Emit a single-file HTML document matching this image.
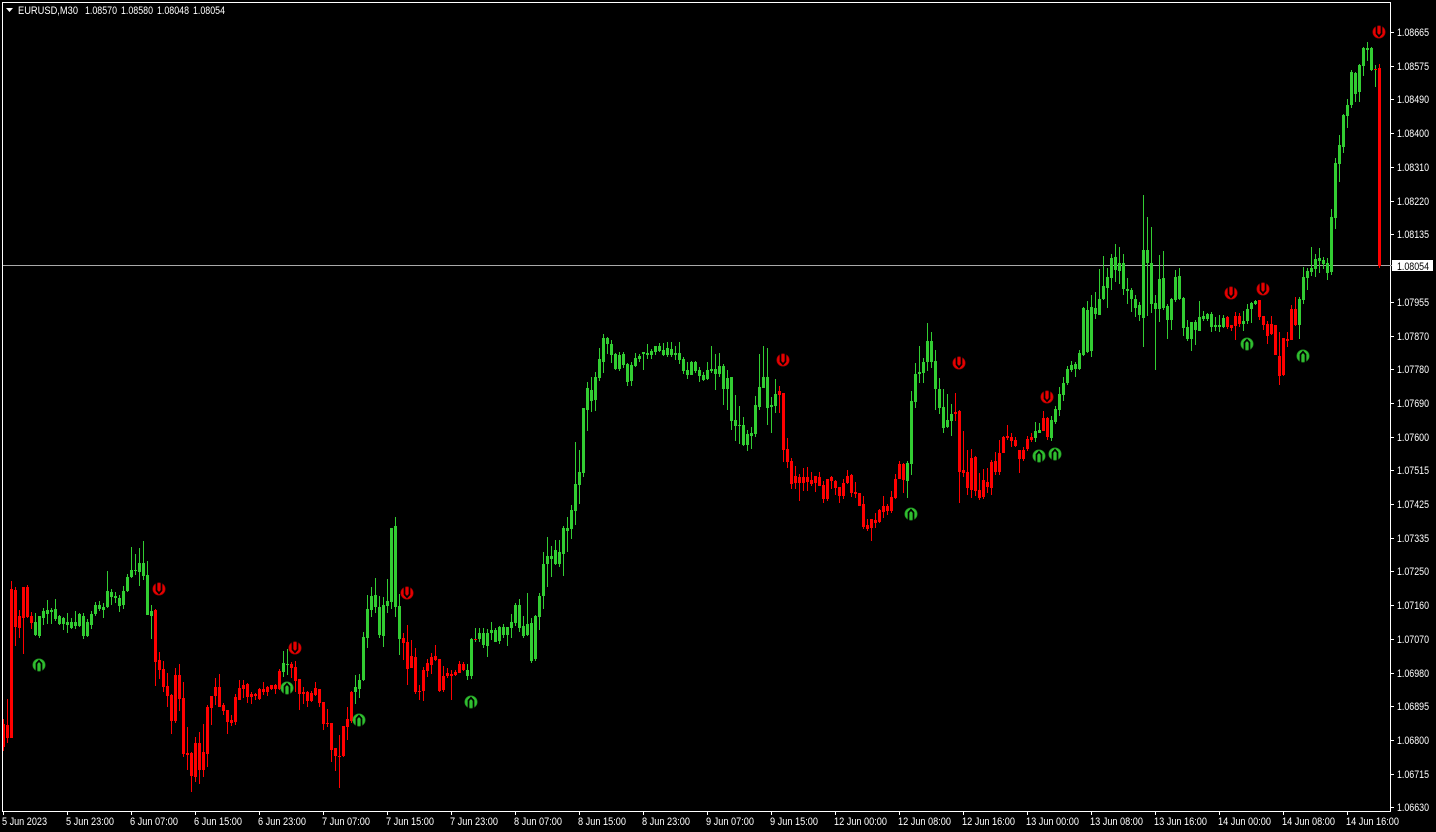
<!DOCTYPE html>
<html><head><meta charset="utf-8"><title>EURUSD,M30</title>
<style>html,body{margin:0;padding:0;background:#000;width:1436px;height:832px;overflow:hidden}
svg{display:block}text{font-family:"Liberation Sans",Arial,sans-serif;font-size:11px;fill:#fff}</style></head><body>
<svg width="1436" height="832" viewBox="0 0 1436 832" xmlns="http://www.w3.org/2000/svg">
<defs>
<g id="dn"><circle r="6.2" fill="#e80000" stroke="#a00000" stroke-width=".6"/><path d="M-2.5 -7V1.500L0 4.200L2.500 1.500V-7" fill="none" stroke="#000" stroke-width="1.700"/></g>
<g id="up"><circle r="6.2" fill="#30c030" stroke="#208a20" stroke-width=".6"/><path d="M-2.5 7V-1.500L0 -4.200L2.500 -1.500V7" fill="none" stroke="#000" stroke-width="1.700"/></g>
</defs>
<rect width="1436" height="832" fill="#000"/>
<g shape-rendering="crispEdges" fill="none">
<path stroke="#a9a9a9" d="M3 265.5H1390"/>
<!-- green wicks -->
<path stroke="#32cd32" d="M35.5 613V636M39.5 616V638M43.5 608V625M47.5 600V624M51.5 608V624M55.5 599V621M59.5 615V625M63.5 617V630M67.5 613V633M71.5 618V629M75.5 611V629M79.5 613V627M83.5 613V639M87.5 619V637M91.5 611V629M95.5 602V616M99.5 601V611M103.5 603V618M107.5 571V608M111.5 589V605M115.5 592V603M119.5 595V612M123.5 586V609M127.5 574V592M131.5 547V578M135.5 554V575M139.5 548V586M143.5 541V580M147.5 561V615M151.5 605V639
M283.5 651V677M287.5 649V675
M355.5 675V704M359.5 674V698M363.5 632V681M367.5 595V648M371.5 587V617M375.5 578V613M379.5 596V638M383.5 597V647M387.5 579V613M391.5 528V609M395.5 517V617M399.5 594V655
M467.5 664V680M471.5 638V679M475.5 628V642M479.5 628V642M483.5 628V648M487.5 629V657M491.5 622V640M495.5 628V642M499.5 626V644M503.5 624V638M507.5 627V646M511.5 614V638M515.5 603V626M519.5 599V632M523.5 616V638M527.5 593V636M531.5 618V663M535.5 615V661M539.5 593V630M543.5 552V609M547.5 537V587M551.5 546V577M555.5 540V565M559.5 540V567M563.5 526V576M567.5 517V552M571.5 505V539M575.5 442V525M579.5 450V504M583.5 408V477M587.5 382V431M591.5 377V412M595.5 372V411M599.5 348V381M603.5 334V373M607.5 337V354M611.5 340V363M615.5 353V370M619.5 352V371M623.5 352V368M627.5 363V386M631.5 362V386M635.5 353V367M639.5 354V362M643.5 352V370M647.5 344V359M651.5 349V359M655.5 346V355M659.5 343V352M663.5 343V356M667.5 342V357M671.5 342V357M675.5 346V360M679.5 342V364M683.5 357V374M687.5 362V379M691.5 361V375M695.5 361V373M699.5 367V382M703.5 372V381M707.5 362V380M711.5 346V373M715.5 354V390M719.5 353V377M723.5 364V405M727.5 370V410M731.5 377V430M735.5 395V441M739.5 406V444M743.5 417V446M747.5 430V451M751.5 427V449M755.5 396V437M759.5 354V410M763.5 346V388M767.5 348V425M771.5 397V433M775.5 379V413
M907.5 461V498M911.5 391V475M915.5 363V408M919.5 346V383M923.5 358V383M927.5 323V371M931.5 332V368M935.5 350V410M939.5 378V414M943.5 389V433M947.5 394V428M951.5 404V436
M1035.5 422V442M1039.5 423V433M1051.5 416V441M1055.5 406V424M1059.5 387V416M1063.5 377V401M1067.5 366V385M1071.5 361V372M1075.5 362V377M1079.5 350V370M1083.5 307V356M1087.5 301V353M1091.5 295V357M1095.5 292V319M1099.5 269V315M1103.5 256V300M1107.5 268V308M1111.5 254V290M1115.5 244V282M1119.5 247V284M1123.5 254V295M1127.5 278V304M1131.5 288V312M1135.5 295V317M1139.5 302V321M1143.5 195V347M1147.5 217V316M1151.5 227V313M1155.5 295V370M1159.5 255V322M1163.5 251V310M1167.5 304V339M1171.5 298V330M1175.5 270V302M1179.5 268V300M1183.5 297V336M1187.5 320V341M1191.5 322V351M1195.5 320V345M1199.5 301V331M1203.5 311V321M1207.5 313V321M1211.5 312V332M1215.5 317V331M1219.5 315V332M1223.5 315V328
M1243.5 311V331M1247.5 304V324M1251.5 302V323M1255.5 300V305
M1299.5 297V339M1303.5 267V304M1307.5 268V290M1311.5 247V276M1315.5 254V277M1319.5 248V273M1323.5 257V269M1327.5 258V280M1331.5 209V275M1335.5 158V229M1339.5 135V182M1343.5 114V153M1347.5 99V128M1351.5 70V108M1355.5 72V102M1359.5 64V102M1363.5 47V76M1367.5 42V61M1371.5 47V71M1375.5 65V87"/>
<!-- green bodies -->
<path stroke="#32cd32" stroke-width="3" d="M35.5 622V635M39.5 616V636M43.5 611V618M47.5 610V614M51.5 610V612M55.5 609V619M59.5 616V624M63.5 618V624M67.5 622V625M71.5 622V628M75.5 622V626M79.5 614V626M83.5 616V636M87.5 622V636M91.5 614V625M95.5 605V614M99.5 605V609M103.5 607V610M107.5 591V607M111.5 592V597M115.5 596V598M119.5 598V606M123.5 591V605M127.5 577V591M131.5 570V577M135.5 570V571M139.5 563V572M143.5 563V576M147.5 575V615M151.5 611V616
M283.5 663V672M287.5 664V665
M355.5 687V692M359.5 680V689M363.5 637V680M367.5 609V638M371.5 596V610M375.5 595V607M379.5 607V635M383.5 605V636M387.5 601V606M391.5 528V602M395.5 526V607M399.5 606V639
M467.5 670V676M471.5 639V676M479.5 633V639M483.5 633V645M487.5 633V646M491.5 630V633M495.5 630V642M499.5 627V641M503.5 627V635M507.5 627V635M511.5 622V628M515.5 605V623M519.5 605V628M523.5 626V636M527.5 624V635M531.5 623V661M535.5 616V659M539.5 596V617M543.5 564V596M547.5 556V564M551.5 556V559M555.5 550V564M559.5 552V564M563.5 528V554M567.5 528V531M571.5 510V529M575.5 484V511M579.5 472V485M583.5 408V473M587.5 388V410M591.5 390V401M595.5 377V400M599.5 359V378M603.5 338V362M607.5 338V344M611.5 344V355M615.5 354V369M619.5 355V369M623.5 354V365M627.5 364V382M631.5 365V381M635.5 358V366M639.5 356V359M643.5 352V354M647.5 353V355M651.5 351V355M655.5 346V352M659.5 346V351M663.5 350V355M667.5 348V355M671.5 349V355M675.5 353V355M679.5 353V360M683.5 359V371M687.5 370V375M691.5 362V375M695.5 362V371M699.5 370V376M703.5 375V380M707.5 370V379M711.5 369V371M715.5 369V374M719.5 366V374M723.5 366V389M727.5 378V389M731.5 377V421M735.5 420V426M739.5 425V426M743.5 425V445M747.5 434V445M751.5 433V436M755.5 405V434M759.5 387V407M763.5 377V388M767.5 377V408M771.5 405V407M775.5 394V406
M907.5 463V481M911.5 401V464M915.5 374V402M919.5 372V374M923.5 362V373M927.5 341V362M931.5 341V362M935.5 361V389M939.5 389V408M943.5 407V428M947.5 420V427M951.5 414V421
M1035.5 431V438M1039.5 430V433M1051.5 420V438M1055.5 409V422M1059.5 394V410M1063.5 383V395M1067.5 369V383M1071.5 365V370M1075.5 364V369M1079.5 353V369M1083.5 308V355M1087.5 310V352M1091.5 307V351M1095.5 308V314M1099.5 299V315M1103.5 286V299M1107.5 277V288M1111.5 258V278M1115.5 257V270M1119.5 263V271M1123.5 263V289M1127.5 289V291M1131.5 290V299M1135.5 299V308M1139.5 305V315M1143.5 250V318M1147.5 250V263M1151.5 263V304M1155.5 303V309M1159.5 279V309M1163.5 278V308M1167.5 306V320M1171.5 299V320M1175.5 277V300M1179.5 276V299M1183.5 298V328M1187.5 327V339M1191.5 322V339M1195.5 322V330M1199.5 317V331M1203.5 316V319M1207.5 314V319M1211.5 314V327M1215.5 325V327M1219.5 325V327M1223.5 318V327
M1243.5 321V324M1247.5 309V321M1251.5 303V309M1255.5 301V304
M1299.5 299V325M1303.5 277V300M1307.5 271V278M1311.5 268V272M1315.5 259V269M1319.5 258V261M1323.5 260V264M1327.5 263V273M1331.5 217V272M1335.5 163V218M1339.5 145V164M1343.5 115V147M1347.5 105V116M1351.5 72V105M1355.5 73V94M1359.5 65V92M1363.5 48V66M1367.5 48V50M1371.5 48V70"/>
<!-- red wicks -->
<path stroke="#f00" d="M3.5 719V751M7.5 699V743M11.5 581V738M15.5 587V646M19.5 610V638M23.5 587V654M27.5 585V618M31.5 612V629
M155.5 609V686M159.5 652V679M163.5 661V692M167.5 673V707M171.5 694V734M175.5 668V723M179.5 664V711M183.5 682V757M187.5 727V770M191.5 752V792M195.5 737V782M199.5 732V784M203.5 724V777M207.5 705V767M211.5 696V725M215.5 678V705M219.5 674V707M223.5 703V715M227.5 710V734M231.5 715V726M235.5 694V725M239.5 680V700M243.5 680V698M247.5 683V703M251.5 692V704M255.5 693V700M259.5 688V700M263.5 682V695M267.5 686V696M271.5 685V690M275.5 684V694M279.5 669V690
M291.5 662V678M295.5 661V692M299.5 679V710M303.5 687V704M307.5 691V707M311.5 691V702M315.5 682V696M319.5 689V707M323.5 702V730M327.5 709V727M331.5 723V762M335.5 748V771M339.5 735V788M343.5 726V757M347.5 707V740M351.5 691V723
M403.5 633V660M407.5 625V685M411.5 640V668M415.5 648V694M419.5 685V700M423.5 667V701M427.5 659V677M431.5 653V674M435.5 645V661M439.5 659V692M443.5 666V692M447.5 668V678M451.5 670V700M455.5 670V676M459.5 661V673M463.5 662V671
M779.5 386V413M783.5 393V462M787.5 438V468M791.5 458V489M795.5 466V489M799.5 474V501M803.5 468V491M807.5 467V491M811.5 472V486M815.5 476V492M819.5 472V486M823.5 481V503M827.5 479V501M831.5 476V489M835.5 480V495M839.5 487V503M843.5 479V499M847.5 470V484M851.5 474V497M855.5 482V498M859.5 493V506M863.5 496V529M867.5 519V531M871.5 519V541M875.5 513V528M879.5 509V523M883.5 496V518M887.5 504V515M891.5 491V513M895.5 474V499M899.5 461V479M903.5 463V493
M955.5 393V421M959.5 410V503M963.5 431V477M967.5 450V495M971.5 449V498M975.5 456V496M979.5 473V500M983.5 469V499M987.5 468V493M991.5 460V495M995.5 452V475M999.5 440V475M1003.5 436V453M1007.5 425V440M1011.5 433V447M1015.5 437V447M1019.5 450V473M1023.5 447V461M1027.5 436V451M1031.5 433V442
M1043.5 411V431M1047.5 417V440
M1227.5 316V329M1231.5 325V331M1235.5 312V340M1239.5 313V327
M1259.5 300V320M1263.5 316V330M1267.5 321V344M1271.5 316V335M1275.5 325V355M1279.5 332V385M1283.5 338V376M1287.5 332V347M1291.5 305V340M1295.5 297V326
M1379.5 64V268"/>
<!-- red bodies -->
<path stroke="#f00" stroke-width="3" d="M3.5 724V747M7.5 725V738M11.5 589V738M15.5 590V627M19.5 616V628M23.5 587V618M27.5 587V617M31.5 616V623
M155.5 610V662M159.5 660V670M163.5 669V687M167.5 686V696M171.5 695V721M175.5 675V721M179.5 675V699M183.5 698V754M187.5 753V755M191.5 753V776M195.5 743V777M199.5 743V770M203.5 752V770M207.5 707V754M211.5 696V708M215.5 687V696M219.5 687V707M223.5 705V711M227.5 710V722M231.5 720V723M235.5 697V722M239.5 688V700M243.5 685V689M247.5 684V697M251.5 694V697M255.5 694V696M259.5 689V699M263.5 689V692M267.5 687V692M271.5 685V689M275.5 685V689M279.5 671V689
M291.5 664V668M295.5 667V681M299.5 679V694M303.5 692V694M307.5 692V701M311.5 693V701M315.5 688V695M319.5 689V703M323.5 702V724M327.5 723V724M331.5 723V750M335.5 748V756M339.5 756V757M343.5 726V756M347.5 719V727M351.5 692V721
M403.5 638V643M407.5 642V669M411.5 656V668M415.5 657V692M419.5 691V692M423.5 670V691M427.5 663V671M431.5 657V665M435.5 656V660M439.5 659V691M443.5 676V690M447.5 673V676M451.5 674V676M455.5 672V675M459.5 664V673M463.5 664V670
M475.5 639V640
M779.5 391V395M783.5 393V450M787.5 449V462M791.5 461V484M795.5 476V483M799.5 477V483M803.5 477V483M807.5 477V482M811.5 480V484M815.5 476V483M819.5 477V486M823.5 485V499M827.5 479V499M831.5 477V481M835.5 481V488M839.5 487V496M843.5 483V496M847.5 476V483M851.5 475V493M855.5 492V494M859.5 493V506M863.5 504V527M867.5 525V529M871.5 519V528M875.5 520V523M879.5 510V522M883.5 506V512M887.5 506V511M891.5 497V511M895.5 479V498M899.5 464V479M903.5 464V480
M955.5 412V414M959.5 411V472M963.5 470V473M967.5 472V488M971.5 458V490M975.5 457V491M979.5 490V498M983.5 480V497M987.5 482V487M991.5 462V488M995.5 461V472M999.5 453V472M1003.5 437V453M1007.5 436V438M1011.5 437V441M1015.5 440V446M1019.5 450V459M1023.5 450V459M1027.5 439V449M1031.5 437V440
M1043.5 418V431M1047.5 418V437
M1227.5 317V327M1231.5 325V328M1235.5 316V326M1239.5 316V324
M1259.5 300V317M1263.5 316V325M1267.5 324V336M1271.5 324V334M1275.5 325V355M1279.5 356V376M1283.5 338V375M1287.5 339V341M1291.5 309V340M1295.5 309V325
M1375.5 69V70M1379.5 68V266"/>
<!-- frame and ticks -->
<path stroke="#fff" d="M2.5 2V812M2 2.5H1391M1390.5 2V812M2 811.5H1391"/>
<path stroke="#fff" d="M3.5 812V815M67.5 812V815M131.5 812V815M195.5 812V815M259.5 812V815M323.5 812V815M387.5 812V815M451.5 812V815M515.5 812V815M579.5 812V815M643.5 812V815M707.5 812V815M771.5 812V815M835.5 812V815M899.5 812V815M963.5 812V815M1027.5 812V815M1091.5 812V815M1155.5 812V815M1219.5 812V815M1283.5 812V815M1347.5 812V815"/>
<path stroke="#fff" d="M1391 32.5H1394M1391 66.5H1394M1391 99.5H1394M1391 133.5H1394M1391 167.5H1394M1391 201.5H1394M1391 234.5H1394M1391 302.5H1394M1391 336.5H1394M1391 369.5H1394M1391 403.5H1394M1391 437.5H1394M1391 470.5H1394M1391 504.5H1394M1391 538.5H1394M1391 571.5H1394M1391 605.5H1394M1391 639.5H1394M1391 673.5H1394M1391 706.5H1394M1391 740.5H1394M1391 774.5H1394M1391 807.5H1394"/>
</g>
<!-- arrows -->
<use href="#dn" x="159" y="589"/><use href="#dn" x="295" y="648"/><use href="#dn" x="407" y="593"/><use href="#dn" x="783" y="360"/><use href="#dn" x="959" y="363"/><use href="#dn" x="1047" y="397"/><use href="#dn" x="1231" y="293"/><use href="#dn" x="1263" y="289"/><use href="#dn" x="1379" y="32"/>
<use href="#up" x="39" y="665"/><use href="#up" x="287" y="688"/><use href="#up" x="359" y="720"/><use href="#up" x="471" y="702"/><use href="#up" x="911" y="514"/><use href="#up" x="1039" y="456"/><use href="#up" x="1055" y="454"/><use href="#up" x="1247" y="344"/><use href="#up" x="1303" y="356"/>
<!-- header -->
<path d="M6 8H13L9.500 12Z" fill="#fff"/>
<text x="18" y="14" textLength="60" lengthAdjust="spacingAndGlyphs">EURUSD,M30</text>
<text x="85" y="14" textLength="32" lengthAdjust="spacingAndGlyphs">1.08570</text>
<text x="121" y="14" textLength="32" lengthAdjust="spacingAndGlyphs">1.08580</text>
<text x="157" y="14" textLength="32" lengthAdjust="spacingAndGlyphs">1.08048</text>
<text x="193" y="14" textLength="32" lengthAdjust="spacingAndGlyphs">1.08054</text>
<!-- price axis -->
<g>
<text x="1397" y="36" textLength="32" lengthAdjust="spacingAndGlyphs">1.08665</text>
<text x="1397" y="70" textLength="32" lengthAdjust="spacingAndGlyphs">1.08575</text>
<text x="1397" y="103" textLength="32" lengthAdjust="spacingAndGlyphs">1.08490</text>
<text x="1397" y="137" textLength="32" lengthAdjust="spacingAndGlyphs">1.08400</text>
<text x="1397" y="171" textLength="32" lengthAdjust="spacingAndGlyphs">1.08310</text>
<text x="1397" y="205" textLength="32" lengthAdjust="spacingAndGlyphs">1.08220</text>
<text x="1397" y="238" textLength="32" lengthAdjust="spacingAndGlyphs">1.08135</text>
<text x="1397" y="306" textLength="32" lengthAdjust="spacingAndGlyphs">1.07955</text>
<text x="1397" y="340" textLength="32" lengthAdjust="spacingAndGlyphs">1.07870</text>
<text x="1397" y="373" textLength="32" lengthAdjust="spacingAndGlyphs">1.07780</text>
<text x="1397" y="407" textLength="32" lengthAdjust="spacingAndGlyphs">1.07690</text>
<text x="1397" y="441" textLength="32" lengthAdjust="spacingAndGlyphs">1.07600</text>
<text x="1397" y="474" textLength="32" lengthAdjust="spacingAndGlyphs">1.07515</text>
<text x="1397" y="508" textLength="32" lengthAdjust="spacingAndGlyphs">1.07425</text>
<text x="1397" y="542" textLength="32" lengthAdjust="spacingAndGlyphs">1.07335</text>
<text x="1397" y="575" textLength="32" lengthAdjust="spacingAndGlyphs">1.07250</text>
<text x="1397" y="609" textLength="32" lengthAdjust="spacingAndGlyphs">1.07160</text>
<text x="1397" y="643" textLength="32" lengthAdjust="spacingAndGlyphs">1.07070</text>
<text x="1397" y="677" textLength="32" lengthAdjust="spacingAndGlyphs">1.06980</text>
<text x="1397" y="710" textLength="32" lengthAdjust="spacingAndGlyphs">1.06895</text>
<text x="1397" y="744" textLength="32" lengthAdjust="spacingAndGlyphs">1.06800</text>
<text x="1397" y="778" textLength="32" lengthAdjust="spacingAndGlyphs">1.06715</text>
<text x="1397" y="811" textLength="32" lengthAdjust="spacingAndGlyphs">1.06630</text>
</g>
<rect x="1392" y="260" width="41" height="11" fill="#fff" shape-rendering="crispEdges"/>
<path d="M1390 265.500H1392" stroke="#a9a9a9" shape-rendering="crispEdges"/>
<text x="1397" y="270" textLength="32" lengthAdjust="spacingAndGlyphs" style="fill:#000">1.08054</text>
<!-- time axis -->
<g>
<text x="2" y="825" textLength="45" lengthAdjust="spacingAndGlyphs">5 Jun 2023</text>
<text x="66" y="825" textLength="48" lengthAdjust="spacingAndGlyphs">5 Jun 23:00</text>
<text x="130" y="825" textLength="48" lengthAdjust="spacingAndGlyphs">6 Jun 07:00</text>
<text x="194" y="825" textLength="48" lengthAdjust="spacingAndGlyphs">6 Jun 15:00</text>
<text x="258" y="825" textLength="48" lengthAdjust="spacingAndGlyphs">6 Jun 23:00</text>
<text x="322" y="825" textLength="48" lengthAdjust="spacingAndGlyphs">7 Jun 07:00</text>
<text x="386" y="825" textLength="48" lengthAdjust="spacingAndGlyphs">7 Jun 15:00</text>
<text x="450" y="825" textLength="48" lengthAdjust="spacingAndGlyphs">7 Jun 23:00</text>
<text x="514" y="825" textLength="48" lengthAdjust="spacingAndGlyphs">8 Jun 07:00</text>
<text x="578" y="825" textLength="48" lengthAdjust="spacingAndGlyphs">8 Jun 15:00</text>
<text x="642" y="825" textLength="48" lengthAdjust="spacingAndGlyphs">8 Jun 23:00</text>
<text x="706" y="825" textLength="48" lengthAdjust="spacingAndGlyphs">9 Jun 07:00</text>
<text x="770" y="825" textLength="48" lengthAdjust="spacingAndGlyphs">9 Jun 15:00</text>
<text x="834" y="825" textLength="53" lengthAdjust="spacingAndGlyphs">12 Jun 00:00</text>
<text x="898" y="825" textLength="53" lengthAdjust="spacingAndGlyphs">12 Jun 08:00</text>
<text x="962" y="825" textLength="53" lengthAdjust="spacingAndGlyphs">12 Jun 16:00</text>
<text x="1026" y="825" textLength="53" lengthAdjust="spacingAndGlyphs">13 Jun 00:00</text>
<text x="1090" y="825" textLength="53" lengthAdjust="spacingAndGlyphs">13 Jun 08:00</text>
<text x="1154" y="825" textLength="53" lengthAdjust="spacingAndGlyphs">13 Jun 16:00</text>
<text x="1218" y="825" textLength="53" lengthAdjust="spacingAndGlyphs">14 Jun 00:00</text>
<text x="1282" y="825" textLength="53" lengthAdjust="spacingAndGlyphs">14 Jun 08:00</text>
<text x="1346" y="825" textLength="53" lengthAdjust="spacingAndGlyphs">14 Jun 16:00</text>
</g>
</svg>
</body></html>
